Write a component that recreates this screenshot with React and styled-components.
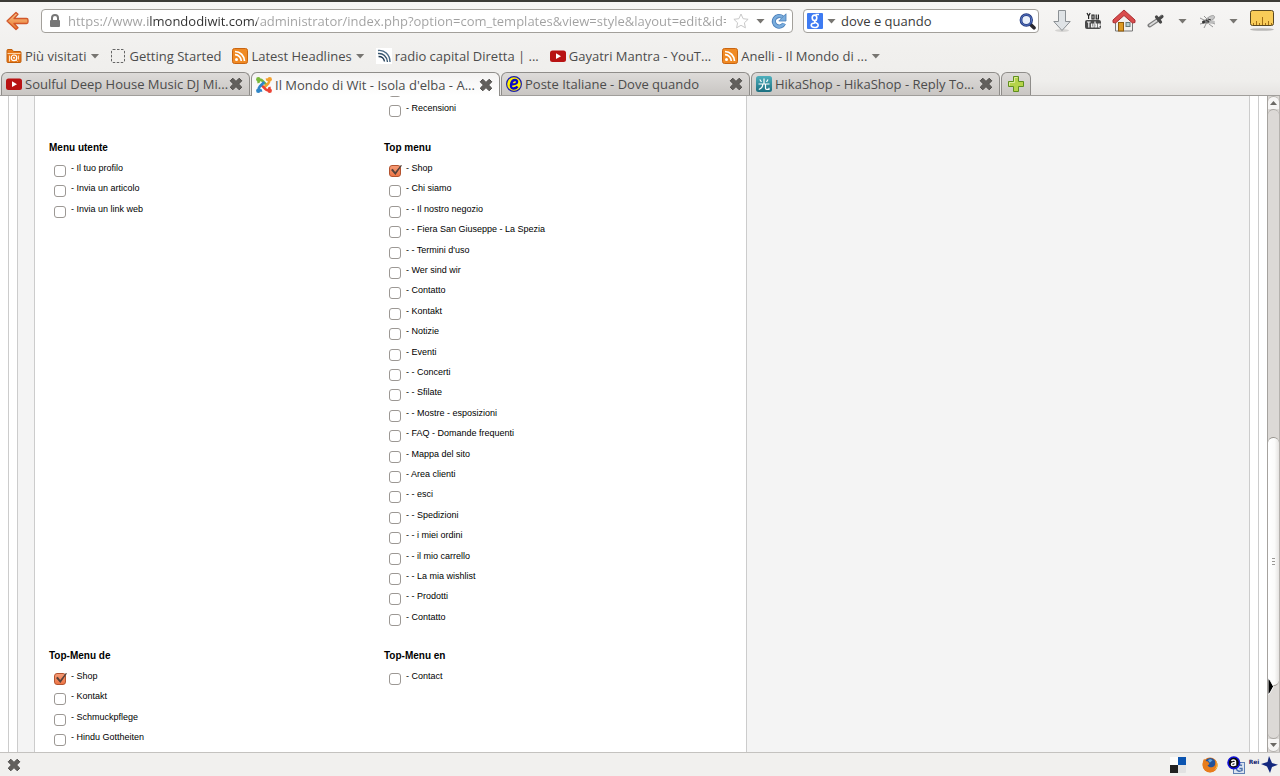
import React from "react";
import styled, { createGlobalStyle } from "styled-components";

const GlobalStyle = createGlobalStyle`
  *, *::before, *::after { box-sizing: border-box; }
  body { margin: 0; background: #fff; }
  button { font: inherit; color: inherit; background: none; border: 0; padding: 0; margin: 0; }
  ul { list-style: none; margin: 0; padding: 0; }
  a { color: inherit; text-decoration: none; }
  svg { display: block; flex: none; }
`;

const Window = styled.div`
  display: grid;
  grid-template-rows: auto 1fr auto;
  min-height: 100vh;
  font-family: "Open Sans", "Noto Sans", sans-serif;
  font-size: 13px;
  color: #4c4c4c;
`;

const Chrome = styled.header`
  border-top: 2px solid #3c3b37;
  border-bottom: 1px solid #a09e9b;
  background: linear-gradient(#f6f5f4, #f1f0ee 50%, #efeeec 85%, #e6e4e2);
  position: relative;
  z-index: 1;
  min-width: 0;
`;

const NavBar = styled.div`
  display: flex;
  align-items: center;
  height: 38px;
  padding: 0 5px 0 6px;
`;

const IconButton = styled.button`
  display: flex;
  align-items: center;
  justify-content: center;
  flex: none;
  width: ${(p) => p.$w || 16}px;
  margin-left: ${(p) => p.$gap || 0}px;
`;

const Field = styled.div`
  display: flex;
  align-items: center;
  height: 24px;
  border: 1px solid #a3a09b;
  border-radius: 4px;
  background: #fff;
  padding: 0 ${(p) => p.$end}px 0 ${(p) => p.$start}px;
  margin-left: ${(p) => p.$gap}px;
  flex: ${(p) => (p.$width ? `0 0 ${p.$width}px` : "1 1 0")};
  min-width: 0;
`;

const TextInput = styled.input`
  flex: 1 1 0;
  min-width: 0;
  height: 22px;
  margin-left: 4px;
  padding: 0;
  border: 0;
  outline: 0;
  background: transparent;
  color: #3a3a3a;
  font: inherit;
`;

const UrlInput = styled(TextInput)`
  margin-left: 7px;
  color: transparent;
  background: linear-gradient(90deg, #a0a0a0 80px, #303030 80px, #303030 189px, #a0a0a0 189px);
  -webkit-background-clip: text;
  background-clip: text;
`;

const BookmarkBar = styled.nav`
  display: flex;
  align-items: center;
  gap: 11px;
  height: 32px;
  padding: 0 6px;
  white-space: nowrap;
`;

const bookmarkLook = `
  display: flex;
  align-items: center;
  gap: 3px;
  line-height: 20px;
`;
const BookmarkLink = styled.a`${bookmarkLook}`;
const BookmarkMenu = styled.button`${bookmarkLook}`;

const Caret = styled.span`
  width: 9px;
  height: 5px;
  margin-left: 1px;
  background: #777571;
  clip-path: polygon(0 0, 100% 0, 50% 100%);
`;

const TabStrip = styled.div`
  display: flex;
  gap: 1px;
  height: 23px;
  padding-left: 1px;
`;

const Tab = styled.div`
  display: flex;
  align-items: center;
  flex: 0 1 249px;
  min-width: 0;
  height: ${(p) => (p.$active ? 24 : 23)}px;
  padding: 0 6px 0 4px;
  border: 1px solid #8f8d8a;
  border-bottom: 0;
  border-radius: 6px 6px 0 0;
  background: ${(p) => (p.$active ? "linear-gradient(#f4f3f2, #fff)" : "linear-gradient(#dddbd9, #c9c6c3)")};
`;

const TabLabel = styled.button`
  display: flex;
  align-items: center;
  gap: 3px;
  flex: 1;
  min-width: 0;
  overflow: hidden;
  line-height: 20px;
  white-space: nowrap;
  text-align: left;
`;

const NewTab = styled.button`
  display: flex;
  align-items: center;
  justify-content: center;
  width: 30px;
  height: 23px;
  border: 1px solid #8f8d8a;
  border-bottom: 0;
  border-radius: 6px 6px 0 0;
  background: linear-gradient(#dddbd9, #c9c6c3);
`;

const Viewport = styled.div`
  display: flex;
  min-height: 0;
  overflow: hidden;
`;

const Outer = styled.div`
  flex: 1;
  display: flex;
  margin: 0 8px;
  border: solid #ccc;
  border-width: 0 1px;
  padding: 0 8px;
`;

const Main = styled.main`
  flex: 1;
  display: grid;
  grid-template-columns: 713fr 502fr;
  padding-left: 16px;
  border: solid #ccc;
  border-width: 0 1px;
  background: #f4f4f4;
`;

const Panel = styled.section`
  display: grid;
  grid-template-columns: 1fr 1fr;
  align-content: start;
  row-gap: 17px;
  margin-top: -18px;
  padding: 0 27px 0 14px;
  border: solid #ccc;
  border-width: 0 1px;
  background: #fff;
  font-family: "Liberation Sans", Arial, sans-serif;
  font-size: 9px;
  color: #000;
`;

const MenuGroup = styled.section`
  min-width: 0;
`;

const MenuTitle = styled.h3`
  margin: 0;
  height: 22px;
  font-size: 10px;
  line-height: 24px;
`;

const MenuRow = styled.li`
  display: flex;
  align-items: flex-start;
  height: 20px;
  padding-left: 5px;
  line-height: 20px;
  white-space: nowrap;
  &:nth-child(5n + 2), &:nth-child(5n + 4) { height: 21px; }
`;

const Checkbox = styled.input`
  appearance: none;
  position: relative;
  flex: none;
  width: 12px;
  height: 12px;
  margin: 7px 5px 0 0;
  border: 1px solid #9c9894;
  border-radius: 3px;
  background: #fff;
  &:checked {
    border-color: #b4532e;
    background: linear-gradient(#f59a75, #ee7647);
  }
  &:checked::after {
    content: "";
    position: absolute;
    left: 1px;
    top: -1px;
    width: 11px;
    height: 10px;
    background: #57423a;
    clip-path: polygon(0 50%, 16% 38%, 38% 70%, 90% 0, 100% 6%, 40% 100%);
  }
`;

const ScrollBar = styled.div`
  display: flex;
  flex-direction: column;
  flex: none;
  width: 13px;
  border-left: 1px solid #a5a29e;
  border-right: 1px solid #b5b2ae;
  background: #dcd9d6;
`;

const ScrollArrow = styled.button`
  display: flex;
  align-items: center;
  justify-content: center;
  height: 13px;
  background: #f6f5f4;
  border-radius: ${(p) => (p.$up ? "6px 6px 0 0" : "0 0 6px 6px")};
  border: solid #b5b2ae;
  border-width: ${(p) => (p.$up ? "1px 0 0" : "0 0 1px")};
  & > span {
    width: 7px;
    height: 4px;
    background: #6b6965;
    clip-path: ${(p) => (p.$up ? "polygon(50% 0, 100% 100%, 0 100%)" : "polygon(0 0, 100% 0, 50% 100%)")};
  }
`;

const Track = styled.div`
  flex: 1;
  display: grid;
  grid-template-rows: 328fr 250fr 52fr;
  border: 1px solid #aaa7a3;
  border-width: 1px 0;
  border-radius: 6px;
`;

const Thumb = styled.div`
  grid-row: 2;
  position: relative;
  display: flex;
  flex-direction: column;
  align-items: center;
  justify-content: center;
  gap: 2px;
  border: solid #98958f;
  border-width: 1px 0;
  border-radius: 6px;
  background: linear-gradient(90deg, #fff, #fbfbfa 60%, #e6e4e2);
  & > i {
    width: 3px;
    height: 1px;
    background: #9a9895;
  }
`;

const Pointer = styled.svg`
  position: absolute;
  left: 0;
  bottom: -10px;
`;

const StatusBar = styled.footer`
  display: flex;
  align-items: center;
  height: 24px;
  padding: 0 2px 0 7px;
  border-top: 1px solid #c4c2bf;
  background: #f1f0ee;
`;

const StatusTools = styled.div`
  display: flex;
  align-items: center;
  margin-left: auto;
`;

const StatusTag = styled.button`
  align-self: flex-start;
  margin-left: 3px;
  color: #14246e;
  font-family: "DejaVu Sans", sans-serif;
  font-size: 6px;
  font-weight: bold;
  line-height: 12px;
  width: 12px;
`;

const CloseIcon = () => (
  <svg width="14" height="14" viewBox="0 0 14 14">
    <path d="M3.8 1.2 7 4.4l3.2-3.2 2.6 2.6L9.6 7l3.2 3.2-2.6 2.6L7 9.6l-3.2 3.2-2.6-2.6L4.4 7 1.2 3.8z" fill="#62605d" stroke="#4c4a48" strokeLinejoin="round" />
  </svg>
);

const BackIcon = () => (
  <svg width="23" height="20" viewBox="0 0 23 20">
    <defs>
      <linearGradient id="back" x1="0" y1="0" x2="0" y2="1">
        <stop offset="0" stopColor="#f9c48a" />
        <stop offset="1" stopColor="#e8762b" />
      </linearGradient>
    </defs>
    <path d="M10 1.5 12 3.200 8 7.500H20.500q1.500 0 1.500 1.500v2q0 1.500-1.500 1.500H8L12 16.800l-2 1.700L1 10z" fill="url(#back)" stroke="#d2572a" strokeWidth="1.3" strokeLinejoin="round" />
  </svg>
);

const LockIcon = () => (
  <svg width="12" height="14" viewBox="0 0 12 14">
    <path d="M3 7V4a3 3 0 0 1 6 0v3" fill="none" stroke="#777" strokeWidth="2" />
    <rect x="1" y="6" width="10" height="7" rx="1" fill="#777" />
  </svg>
);

const StarIcon = () => (
  <svg width="16" height="16" viewBox="0 0 16 16">
    <path d="m8 1 2.1 4.7 5 .6-3.7 3.5 1 5L8 12.300l-4.400 2.500 1-5L.9 6.300l5-.6z" fill="#fff" stroke="#c8c8c8" strokeLinejoin="round" />
  </svg>
);

const ReloadIcon = () => (
  <svg width="16" height="16" viewBox="0 0 16 16">
    <path d="M11.500 4.200A5.300 5.300 0 1 0 13 10.500" fill="none" stroke="#4a7db8" strokeWidth="4.200" />
    <path d="M11.500 4.200A5.300 5.300 0 1 0 13 10.500" fill="none" stroke="#7aaddd" strokeWidth="2.600" />
    <path d="M15 .8v7.200H7.800z" fill="#7aaddd" stroke="#4a7db8" strokeWidth=".8" />
  </svg>
);

const GoogleIcon = () => (
  <svg width="16" height="16" viewBox="0 0 16 16">
    <rect width="16" height="16" rx="1" fill="#3e7bf2" />
    <g fill="none" stroke="#fff" strokeWidth="1.600">
      <ellipse cx="7.500" cy="4.800" rx="2.300" ry="2.700" />
      <path d="M12 1.500H8.500M9.300 6.500c.6 1-2 1.500-1.800 2.400s3.700 1 3.700 3-1.800 2.600-3.700 2.600-3.300-.8-3.300-2.200S6 10 8 10" />
    </g>
  </svg>
);

const SearchIcon = () => (
  <svg width="17" height="17" viewBox="0 0 17 17">
    <path d="m10.500 10.500 4.500 4.300" stroke="#2b2930" strokeWidth="3.600" strokeLinecap="round" />
    <circle cx="7.300" cy="7" r="5.300" fill="#e9f0fb" stroke="#263c82" strokeWidth="2.800" />
    <circle cx="7.300" cy="7" r="5.300" fill="none" stroke="#5676c4" strokeWidth="1" />
  </svg>
);

const DownloadIcon = () => (
  <svg width="20" height="24" viewBox="0 0 20 24">
    <ellipse cx="10" cy="21.500" rx="7" ry="1.500" fill="#d5d4d2" />
    <path d="M6.500 1.500h7v11h4.700L10 21.500 1.800 12.500h4.700z" fill="#dfe3e6" stroke="#8b9094" strokeLinejoin="round" />
  </svg>
);

const YouTubeWordIcon = () => (
  <svg width="18" height="18" viewBox="0 0 18 18">
    <rect x="1" y="8" width="16" height="9" rx="2" fill="#4a4a4a" />
    <g fill="none" strokeWidth="1.200">
      <path d="m3 1 1.600 3L6.200 1M4.600 4v3M8 3h2v4H8zM12.200 2.500V7h2.200V2.500" stroke="#222" />
      <path d="M3 10h3.600M4.800 10v5.500M7.500 11.500V15h1.700v-3.500M11 9.500V15h1.500v-3H11M16 15h-1.600v-3H16v1.500h-1.600" stroke="#f4f4f4" />
    </g>
  </svg>
);

const HomeIcon = () => (
  <svg width="24" height="24" viewBox="0 0 24 24">
    <path d="M3.500 10.500 12 4l8.500 6.500V22h-17z" fill="#f1f0ee" stroke="#777" />
    <rect x="6.500" y="13.500" width="5" height="8.500" fill="#dd9a23" stroke="#8f5b0c" />
    <rect x="14" y="13.500" width="4" height="4" fill="#b5ced0" stroke="#67797a" />
    <path d="M12 1 23 11v2.500l-2.500.5L12 6.500 3.500 14 1 13.500V11z" fill="#d94c4c" stroke="#a92f32" strokeLinejoin="round" />
  </svg>
);

const DropperIcon = () => (
  <svg width="18" height="16" viewBox="0 0 18 16">
    <path d="M2.500 12.500 10 7.500" stroke="#7c7c7c" strokeWidth="4" strokeLinecap="round" />
    <path d="M3 12.200 9.500 7.700" stroke="#dcdcdc" strokeWidth="1.800" strokeLinecap="round" />
    <path d="m9.500 4 4 5M12 6l3-2.500" stroke="#484848" strokeWidth="3.200" strokeLinecap="round" />
    <path d="m12.500 3.500 2-1.300" stroke="#8a8a8a" strokeLinecap="round" />
  </svg>
);

const FlyIcon = () => (
  <svg width="17" height="15" viewBox="0 0 17 15">
    <g stroke="#888" strokeWidth=".9" fill="none">
      <path d="M5 6 1 4M5 9l-4 1M7 10l-2 4M10 10l4 3M8 5 5 2M11 8l5 2" />
    </g>
    <ellipse cx="11.500" cy="4.500" rx="4.500" ry="2.200" transform="rotate(-28 11.500 4.500)" fill="#c6c6c6" stroke="#8a8a8a" strokeWidth=".6" />
    <ellipse cx="12" cy="8" rx="4" ry="1.700" fill="#bdbdbd" />
    <ellipse cx="7.500" cy="7.500" rx="3" ry="2.200" fill="#777" />
    <circle cx="4.500" cy="8" r="1.500" fill="#333" />
    <path d="m7 6 3 2M9 5l3 1" stroke="#333" />
  </svg>
);

const RulerIcon = () => (
  <svg width="26" height="24" viewBox="0 0 26 24">
    <ellipse cx="13" cy="20.500" rx="12" ry="1.300" fill="#b9b8b6" />
    <rect x="1.500" y="1.500" width="23" height="15" rx="2" fill="#f9cc58" stroke="#594820" />
    <path d="M4.500 16v-2M7.500 16v-4M10.500 16v-2M13.500 16V8M16.500 16v-2M19.500 16v-4M22.500 16v-2" stroke="#a36f16" />
  </svg>
);

const FolderIcon = () => (
  <svg width="16" height="16" viewBox="0 0 16 16">
    <path d="M1 2.500q0-1 1-1h4l1.500 2H14q1 0 1 1v9q0 1-1 1H2q-1 0-1-1z" fill="#e8791b" stroke="#bf5e0c" />
    <path d="M1.500 5.500h13" stroke="#fbd2a5" />
    <circle cx="8" cy="9.800" r="2.800" fill="none" stroke="#fff" strokeWidth="1.200" />
    <path d="m10 12 1.500 1.500M3.500 7.500v6M12.500 7.500v4" stroke="#fbe3c8" />
    <circle cx="8" cy="9.800" r="1" fill="#fff" />
  </svg>
);

const DashedIcon = () => (
  <svg width="16" height="16" viewBox="0 0 16 16">
    <rect x="1.500" y="1.500" width="13" height="13" rx="1.500" fill="none" stroke="#666" strokeDasharray="2.500 1.500" />
  </svg>
);

const FeedIcon = () => (
  <svg width="16" height="16" viewBox="0 0 16 16">
    <rect x=".5" y=".5" width="15" height="15" rx="2" fill="#f08a24" stroke="#c96511" />
    <circle cx="4.500" cy="11.500" r="1.500" fill="#fff" />
    <path d="M3 6.700a6.300 6.300 0 0 1 6.300 6.300M3 3.500A9.500 9.500 0 0 1 12.500 13" fill="none" stroke="#fff" strokeWidth="1.700" />
  </svg>
);

const RadioIcon = () => (
  <svg width="16" height="16" viewBox="0 0 16 16">
    <rect width="16" height="16" fill="#fff" />
    <g fill="none" strokeWidth="1.400">
      <path d="M2 2.500c6-1 12 4 12 11.500" stroke="#4b6b86" />
      <path d="M2 5.500c5-.5 9 3 9.500 8.500" stroke="#35536c" />
      <path d="M2.500 8.500c3 0 5.500 2 6 5" stroke="#223c55" />
    </g>
  </svg>
);

const PlayIcon = () => (
  <svg width="16" height="16" viewBox="0 0 16 16">
    <rect x="0" y="2.500" width="16" height="11.500" rx="2.500" fill="#b81313" />
    <path d="M6 5.300 11 8.200 6 11z" fill="#fff" />
  </svg>
);

const JoomlaIcon = () => (
  <svg width="16" height="16" viewBox="0 0 16 16">
    <g fill="none" strokeWidth="2.600">
      <path d="M2.800 6C1.800 3.500 4.500 1.800 6.500 3.800L11 8.300" stroke="#7ab93c" />
      <path d="M10 2.800C12.500 1.800 14.200 4.500 12.200 6.500L7.700 11" stroke="#f2a12e" />
      <path d="M13.200 10c1 2.500-1.700 4.200-3.700 2.200L5 7.700" stroke="#ec4234" />
      <path d="M6 13.200C3.500 14.200 1.800 11.500 3.800 9.500L8.300 5" stroke="#2f86c8" />
    </g>
    <circle cx="2.300" cy="2.300" r="2.200" fill="#7ab93c" />
    <circle cx="13.700" cy="2.300" r="2.200" fill="#f2a12e" />
    <circle cx="13.700" cy="13.700" r="2.200" fill="#ec4234" />
    <circle cx="2.300" cy="13.700" r="2.200" fill="#2f86c8" />
  </svg>
);

const PosteIcon = () => (
  <svg width="16" height="16" viewBox="0 0 16 16">
    <circle cx="8" cy="8" r="7.400" fill="#fff200" stroke="#1b1bb0" strokeWidth="1.200" />
    <path d="M11.500 10.500c-1 1.500-2.400 2-4 2-2 0-3-1.500-2.500-4S7.200 4 9 4c1.600 0 2.500 1 2 2.500S9 8.500 5.500 8.500" fill="none" stroke="#0909c8" strokeWidth="2.300" />
  </svg>
);

const HikaIcon = () => (
  <svg width="16" height="16" viewBox="0 0 16 16">
    <defs>
      <linearGradient id="hika" x1="0" y1="0" x2="0" y2="1">
        <stop offset="0" stopColor="#4fb0bd" />
        <stop offset="1" stopColor="#1b6f80" />
      </linearGradient>
    </defs>
    <rect width="16" height="16" rx="2.500" fill="url(#hika)" />
    <path d="M8 2.500v5M3.800 3.500 5.500 6M12 3.500 10.500 6M2.500 8h11M6.800 8c0 3-1.500 4.500-4 5.500M9.500 8v4.500q0 .8 1 .8H13v-1.500" fill="none" stroke="#fff" strokeWidth="1.200" />
  </svg>
);

const PlusIcon = () => (
  <svg width="18" height="18" viewBox="0 0 18 18">
    <path d="M6.500 1.500h5v5h5v5h-5v5h-5v-5h-5v-5h5z" fill="#b5d34a" stroke="#5f8f1e" strokeLinejoin="round" />
    <path d="M7.500 7.500v-5h3M2.500 10.500v-3h5" fill="none" stroke="#dcec9a" />
  </svg>
);

const DeliciousIcon = () => (
  <svg width="16" height="16" viewBox="0 0 16 16">
    <rect width="16" height="16" rx="1" fill="#e2e2e2" />
    <path d="M0 0h8v8H0z" fill="#fcfcfc" />
    <path d="M8 0h8v8H8z" fill="#0b54b0" />
    <path d="M0 8h8v8H0z" fill="#222" />
  </svg>
);

const FirefoxIcon = () => (
  <svg width="16" height="16" viewBox="0 0 16 16">
    <circle cx="8" cy="8" r="7.500" fill="#e2761b" />
    <circle cx="8.300" cy="6.300" r="5.300" fill="#23539a" />
    <path d="M6 3c2-1.500 4-.5 4.500.5C9 4 9 5.500 7.500 5.500z" fill="#69a7dc" />
    <path d="M.8 6c0-2 .7-3.500 1.400-4.300L3.500 4 6 4.500 7.500 7 5.500 8.500c1.500 2.500 5 2 7 .5 1-1.500 1.200-4 .3-6C17 6.500 16 13 11.500 14.500 5 17 0 12 .8 6" fill="#e87d1c" />
    <path d="M13.500 3.500c2.300 4 1 8-2 9.800 4.500-.8 5.300-6.300 2-9.800" fill="#fbd04c" />
  </svg>
);

const AssistantIcon = () => (
  <svg width="18" height="18" viewBox="0 0 18 18">
    <rect x="6.500" y="6.500" width="11" height="11" fill="#dbe3ef" stroke="#5f80b4" />
    <path d="M15 9.500c-3-1.500-5.500.5-5.500 3s3 3.500 5.500 2v-2h-2.500" fill="none" stroke="#4a70ac" strokeWidth="1.400" />
    <circle cx="6.800" cy="6.800" r="5.800" fill="#080808" stroke="#1010d8" strokeWidth="1.600" />
    <path d="M4.500 5C5.500 3.700 8.500 3.700 8.500 5.500v4.200M8.500 7C6 6.500 4.500 7 4.500 8.400s3 1.800 4-.3" fill="none" stroke="#fff" strokeWidth="1.500" />
  </svg>
);

const PinwheelIcon = () => (
  <svg width="17" height="17" viewBox="0 0 17 17">
    <path d="M8 0 11 7 17 8.800 11 11 9 17 6 10.500 0 8 6.500 6z" fill="#14287e" />
  </svg>
);

const bookmarks = [
  { label: "Più visitati", Icon: FolderIcon, menu: true },
  { label: "Getting Started", Icon: DashedIcon },
  { label: "Latest Headlines", Icon: FeedIcon, menu: true },
  { label: "radio capital Diretta | ...", Icon: RadioIcon },
  { label: "Gayatri Mantra - YouT...", Icon: PlayIcon },
  { label: "Anelli - Il Mondo di ...", Icon: FeedIcon, menu: true },
];

const tabs = [
  { label: "Soulful Deep House Music DJ Mi...", Icon: PlayIcon },
  { label: "Il Mondo di Wit - Isola d'elba - A...", Icon: JoomlaIcon, active: true },
  { label: "Poste Italiane - Dove quando", Icon: PosteIcon },
  { label: "HikaShop - HikaShop - Reply To...", Icon: HikaIcon },
];

const groups = [
  { id: "utente", title: "Menu utente", items: ["- Il tuo profilo", "- Invia un articolo", "- Invia un link web"] },
  {
    id: "top",
    title: "Top menu",
    checked: 0,
    items: [
      "- Shop", "- Chi siamo", "- - Il nostro negozio", "- - Fiera San Giuseppe - La Spezia",
      "- - Termini d'uso", "- Wer sind wir", "- Contatto", "- Kontakt", "- Notizie", "- Eventi",
      "- - Concerti", "- - Sfilate", "- - Mostre - esposizioni", "- FAQ - Domande frequenti",
      "- Mappa del sito", "- Area clienti", "- - esci", "- - Spedizioni", "- - i miei ordini",
      "- - il mio carrello", "- - La mia wishlist", "- - Prodotti", "- Contatto",
    ],
  },
  { id: "de", title: "Top-Menu de", checked: 0, items: ["- Shop", "- Kontakt", "- Schmuckpflege", "- Hindu Gottheiten"] },
  { id: "en", title: "Top-Menu en", items: ["- Contact"] },
];

const MenuItem = ({ id, label, checked }) => (
  <MenuRow>
    <Checkbox type="checkbox" id={id} defaultChecked={checked} aria-label={label ? undefined : "Voce di menu"} />
    {label && <label htmlFor={id}>{label}</label>}
  </MenuRow>
);

export default function App() {
  return (
    <Window>
      <GlobalStyle />
      <Chrome>
        <NavBar>
          <IconButton $w={23} aria-label="Indietro"><BackIcon /></IconButton>
          <Field $gap={12} $start={7} $end={5}>
            <LockIcon />
            <UrlInput
              aria-label="Indirizzo"
              defaultValue="https://www.ilmondodiwit.com/administrator/index.php?option=com_templates&view=style&layout=edit&id="
            />
            <IconButton $gap={7} aria-label="Aggiungi ai segnalibri"><StarIcon /></IconButton>
            <IconButton $gap={5} $w={12} aria-label="Cronologia"><Caret /></IconButton>
            <IconButton $gap={5} aria-label="Ricarica"><ReloadIcon /></IconButton>
          </Field>
          <Field $gap={10} $start={3} $end={2} $width={236}>
            <GoogleIcon />
            <IconButton $gap={2} $w={12} aria-label="Motore di ricerca"><Caret /></IconButton>
            <TextInput aria-label="Cerca" defaultValue="dove e quando" />
            <IconButton $w={17} aria-label="Avvia ricerca"><SearchIcon /></IconButton>
          </Field>
          <IconButton $gap={13} $w={20} aria-label="Download"><DownloadIcon /></IconButton>
          <IconButton $gap={12} $w={18} aria-label="YouTube"><YouTubeWordIcon /></IconButton>
          <IconButton $gap={10} $w={24} aria-label="Pagina iniziale"><HomeIcon /></IconButton>
          <IconButton $gap={11} $w={18} aria-label="Contagocce"><DropperIcon /></IconButton>
          <IconButton $gap={9} aria-label="Opzioni contagocce"><Caret /></IconButton>
          <IconButton $gap={9} $w={17} aria-label="Firebug"><FlyIcon /></IconButton>
          <IconButton $gap={9} aria-label="Opzioni Firebug"><Caret /></IconButton>
          <IconButton $gap={8} $w={26} aria-label="Righello"><RulerIcon /></IconButton>
        </NavBar>
        <BookmarkBar>
          {bookmarks.map(({ label, Icon, menu }) =>
            menu ? (
              <BookmarkMenu key={label}><Icon />{label}<Caret /></BookmarkMenu>
            ) : (
              <BookmarkLink key={label} href="#"><Icon />{label}</BookmarkLink>
            )
          )}
        </BookmarkBar>
        <TabStrip>
          {tabs.map(({ label, Icon, active }) => (
            <Tab key={label} $active={active}>
              <TabLabel><Icon />{label}</TabLabel>
              <IconButton $w={14} aria-label="Chiudi scheda"><CloseIcon /></IconButton>
            </Tab>
          ))}
          <NewTab aria-label="Nuova scheda"><PlusIcon /></NewTab>
        </TabStrip>
      </Chrome>

      <Viewport>
        <Outer>
          <Main>
            <Panel>
              <MenuGroup />
              <MenuGroup>
                <ul>
                  <MenuItem id="main-0" />
                  <MenuItem id="main-1" label="- Recensioni" />
                </ul>
              </MenuGroup>
              {groups.map((g) => (
                <MenuGroup key={g.id}>
                  <MenuTitle>{g.title}</MenuTitle>
                  <ul>
                    {g.items.map((label, i) => (
                      <MenuItem key={i} id={`${g.id}-${i}`} label={label} checked={g.checked === i} />
                    ))}
                  </ul>
                </MenuGroup>
              ))}
            </Panel>
          </Main>
        </Outer>
        <ScrollBar>
          <ScrollArrow $up aria-label="Scorri su"><span /></ScrollArrow>
          <Track>
            <Thumb>
              <i /><i /><i />
              <Pointer width="6" height="17" viewBox="0 0 6 17">
                <path d="M0 .5 2 2 5.500 8.500 2 15 0 16.500z" fill="#000" stroke="#fff" />
              </Pointer>
            </Thumb>
          </Track>
          <ScrollArrow aria-label="Scorri giù"><span /></ScrollArrow>
        </ScrollBar>
      </Viewport>

      <StatusBar>
        <IconButton $w={14} aria-label="Chiudi barra"><CloseIcon /></IconButton>
        <StatusTools>
          <IconButton aria-label="Delicious"><DeliciousIcon /></IconButton>
          <IconButton $gap={16} aria-label="Firefox"><FirefoxIcon /></IconButton>
          <IconButton $gap={9} $w={18} aria-label="Alexa"><AssistantIcon /></IconButton>
          <StatusTag>Rei</StatusTag>
          <IconButton $gap={1} $w={17} aria-label="Componenti"><PinwheelIcon /></IconButton>
        </StatusTools>
      </StatusBar>
    </Window>
  );
}
